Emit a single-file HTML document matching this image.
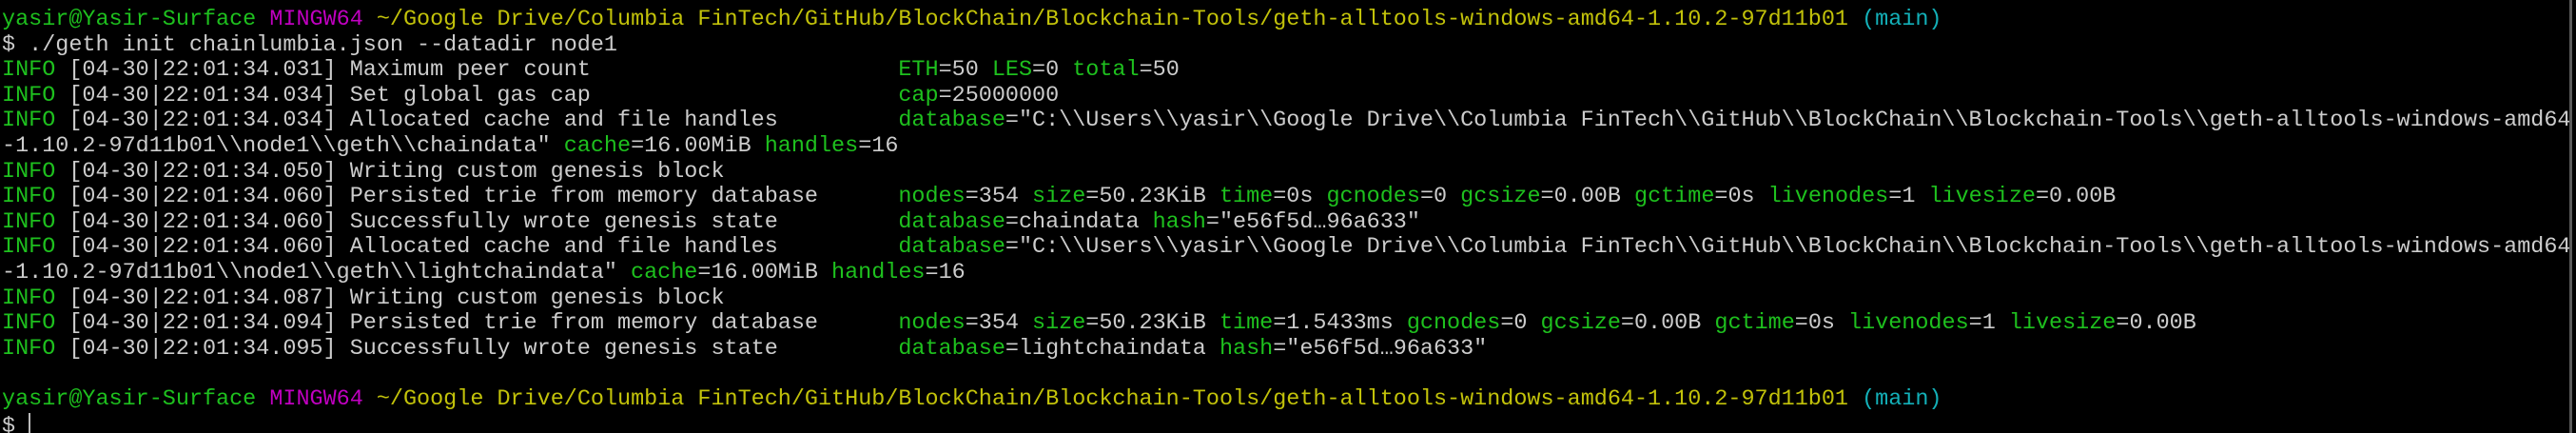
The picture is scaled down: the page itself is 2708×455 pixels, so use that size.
<!DOCTYPE html>
<html><head><meta charset="utf-8"><style>
html,body{margin:0;padding:0;background:#000;width:2708px;height:455px;overflow:hidden;position:relative}
pre{margin:0;position:absolute;left:2px;top:8px;font-family:"Liberation Mono",monospace;font-size:23.45px;line-height:26.6px;color:#cccccc;white-space:pre}
.g{color:#1ec01e}.y{color:#c2c20a}.m{color:#c000c0}.c{color:#13b0b8}
.sb{position:absolute;right:4px;top:0;width:3px;height:455px;background:#5a5a5a}
.cur{display:inline-block;width:2px;height:26px;background:#bbb;vertical-align:-6px}
</style></head><body>
<pre><span class="g">yasir@Yasir-Surface</span> <span class="m">MINGW64</span> <span class="y">~/Google Drive/Columbia FinTech/GitHub/BlockChain/Blockchain-Tools/geth-alltools-windows-amd64-1.10.2-97d11b01</span> <span class="c">(main)</span>
$ ./geth init chainlumbia.json --datadir node1
<span class="g">INFO</span> [04-30|22:01:34.031] Maximum peer count                       <span class="g">ETH</span>=50 <span class="g">LES</span>=0 <span class="g">total</span>=50
<span class="g">INFO</span> [04-30|22:01:34.034] Set global gas cap                       <span class="g">cap</span>=25000000
<span class="g">INFO</span> [04-30|22:01:34.034] Allocated cache and file handles         <span class="g">database</span>="C:\\Users\\yasir\\Google Drive\\Columbia FinTech\\GitHub\\BlockChain\\Blockchain-Tools\\geth-alltools-windows-amd64
-1.10.2-97d11b01\\node1\\geth\\chaindata" <span class="g">cache</span>=16.00MiB <span class="g">handles</span>=16
<span class="g">INFO</span> [04-30|22:01:34.050] Writing custom genesis block
<span class="g">INFO</span> [04-30|22:01:34.060] Persisted trie from memory database      <span class="g">nodes</span>=354 <span class="g">size</span>=50.23KiB <span class="g">time</span>=0s <span class="g">gcnodes</span>=0 <span class="g">gcsize</span>=0.00B <span class="g">gctime</span>=0s <span class="g">livenodes</span>=1 <span class="g">livesize</span>=0.00B
<span class="g">INFO</span> [04-30|22:01:34.060] Successfully wrote genesis state         <span class="g">database</span>=chaindata <span class="g">hash</span>="e56f5d…96a633"
<span class="g">INFO</span> [04-30|22:01:34.060] Allocated cache and file handles         <span class="g">database</span>="C:\\Users\\yasir\\Google Drive\\Columbia FinTech\\GitHub\\BlockChain\\Blockchain-Tools\\geth-alltools-windows-amd64
-1.10.2-97d11b01\\node1\\geth\\lightchaindata" <span class="g">cache</span>=16.00MiB <span class="g">handles</span>=16
<span class="g">INFO</span> [04-30|22:01:34.087] Writing custom genesis block
<span class="g">INFO</span> [04-30|22:01:34.094] Persisted trie from memory database      <span class="g">nodes</span>=354 <span class="g">size</span>=50.23KiB <span class="g">time</span>=1.5433ms <span class="g">gcnodes</span>=0 <span class="g">gcsize</span>=0.00B <span class="g">gctime</span>=0s <span class="g">livenodes</span>=1 <span class="g">livesize</span>=0.00B
<span class="g">INFO</span> [04-30|22:01:34.095] Successfully wrote genesis state         <span class="g">database</span>=lightchaindata <span class="g">hash</span>="e56f5d…96a633"

<span class="g">yasir@Yasir-Surface</span> <span class="m">MINGW64</span> <span class="y">~/Google Drive/Columbia FinTech/GitHub/BlockChain/Blockchain-Tools/geth-alltools-windows-amd64-1.10.2-97d11b01</span> <span class="c">(main)</span>
$ <span class="cur"></span></pre>
<div class="sb"></div>
</body></html>
